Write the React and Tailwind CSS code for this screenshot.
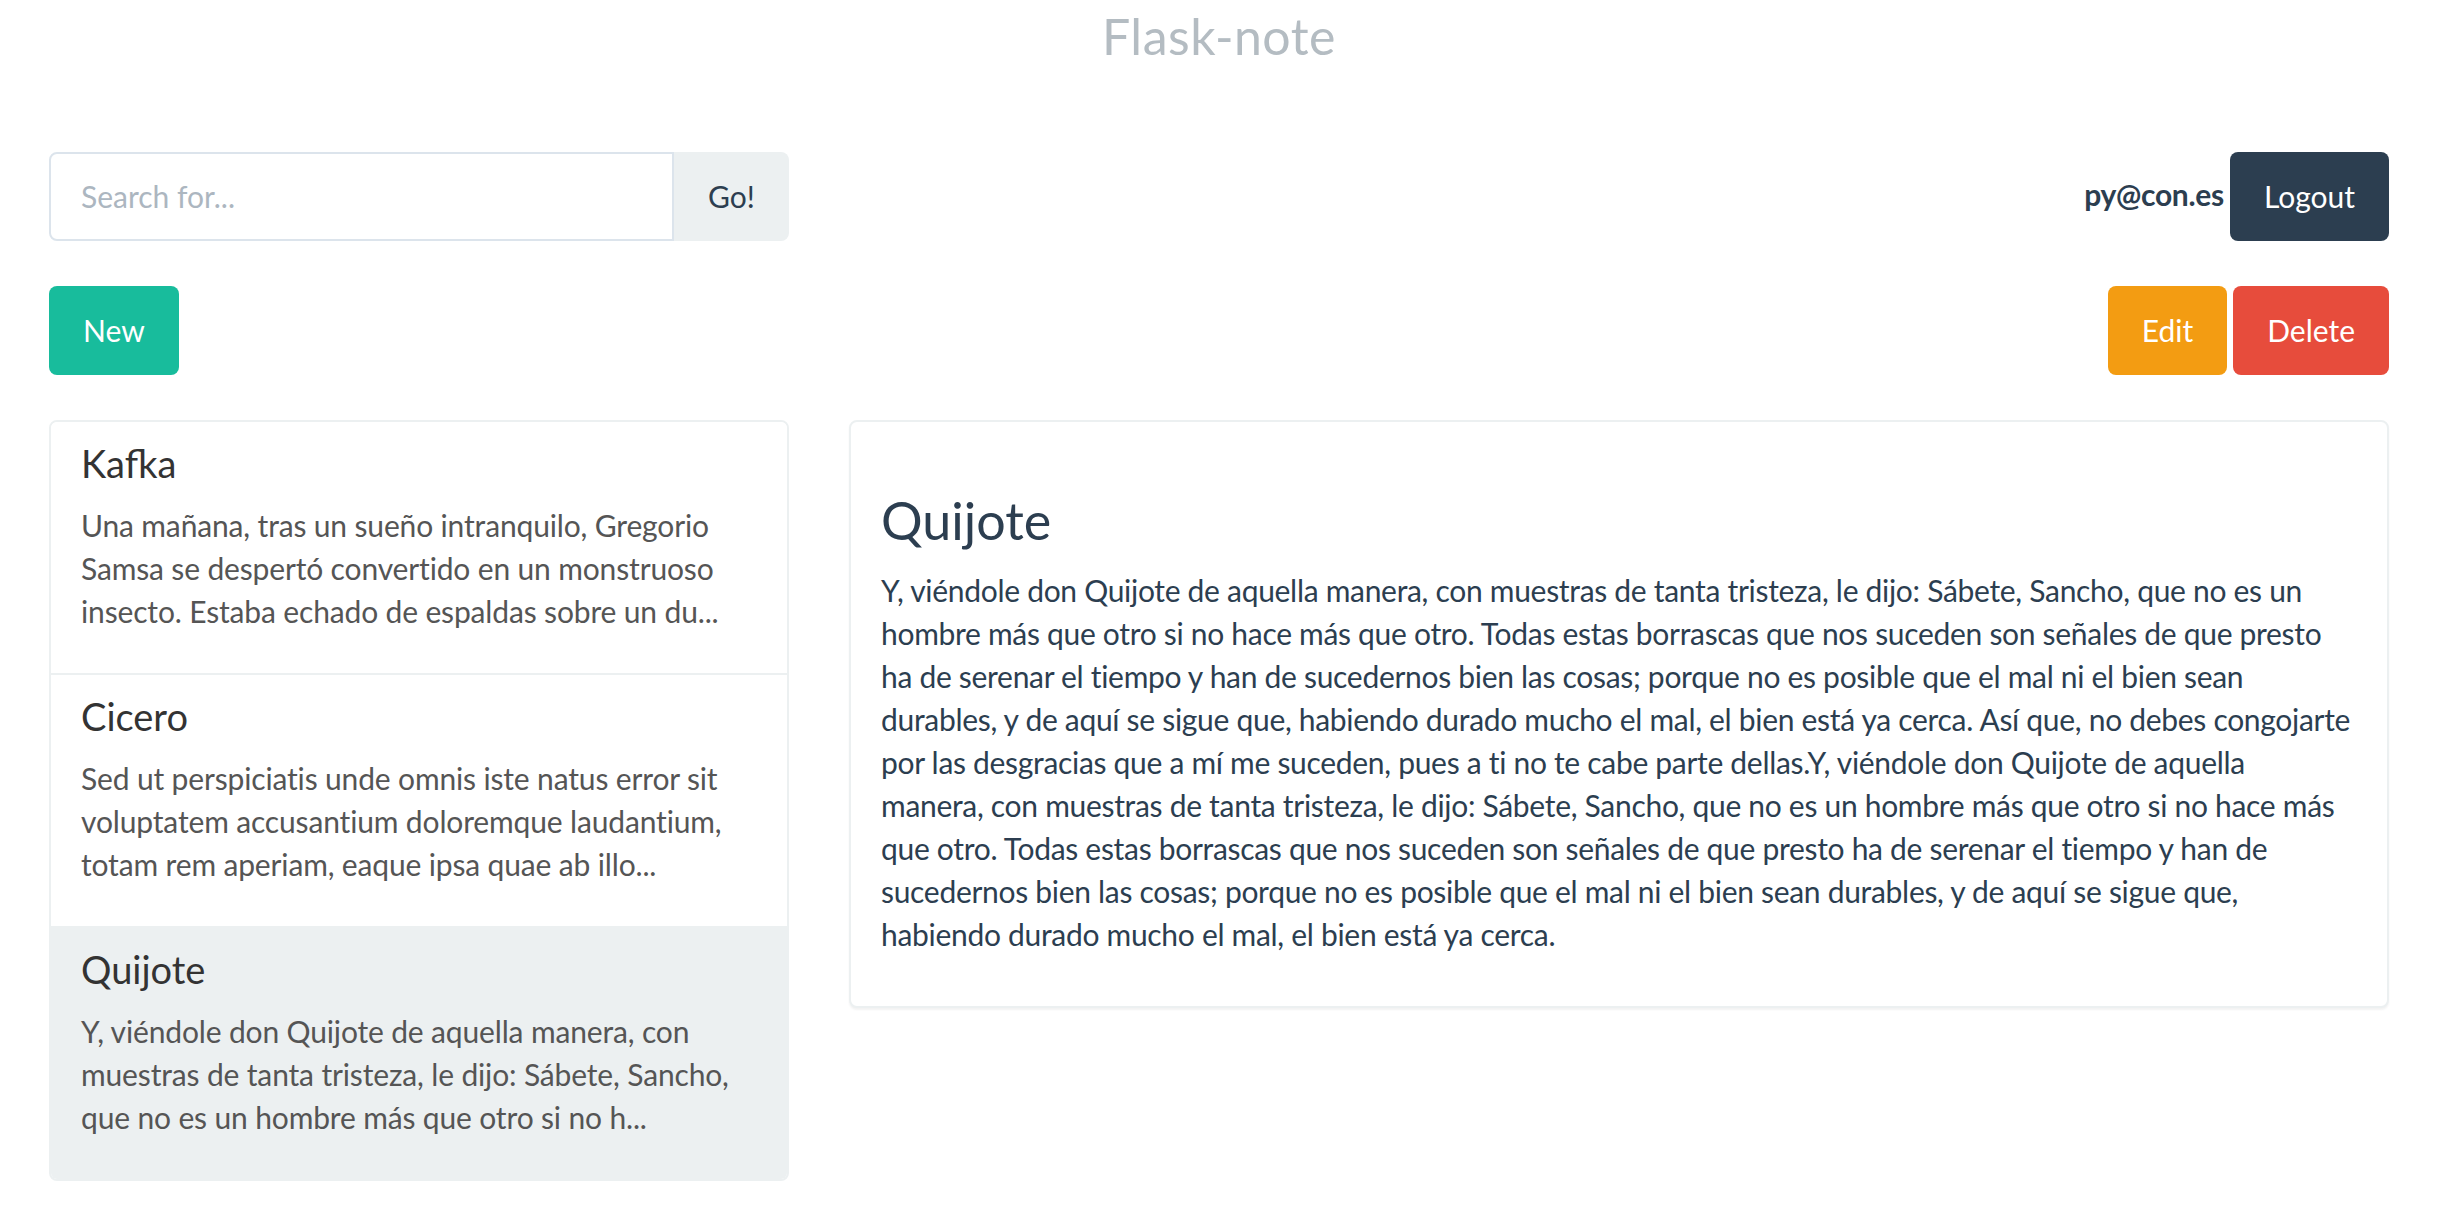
import { useState } from "react";

const notes = [
    {
        id: 1,
        title: "Kafka",
        preview:
            "Una mañana, tras un sueño intranquilo, Gregorio Samsa se despertó convertido en un monstruoso insecto. Estaba echado de espaldas sobre un du...",
    },
    {
        id: 2,
        title: "Cicero",
        preview:
            "Sed ut perspiciatis unde omnis iste natus error sit voluptatem accusantium doloremque laudantium, totam rem aperiam, eaque ipsa quae ab illo...",
    },
    {
        id: 3,
        title: "Quijote",
        preview:
            "Y, viéndole don Quijote de aquella manera, con muestras de tanta tristeza, le dijo: Sábete, Sancho, que no es un hombre más que otro si no h...",
    },
];

const quijote =
    "Y, viéndole don Quijote de aquella manera, con muestras de tanta tristeza, le dijo: Sábete, Sancho, que no es un hombre más que otro si no hace más que otro. Todas estas borrascas que nos suceden son señales de que presto ha de serenar el tiempo y han de sucedernos bien las cosas; porque no es posible que el mal ni el bien sean durables, y de aquí se sigue que, habiendo durado mucho el mal, el bien está ya cerca. Así que, no debes congojarte por las desgracias que a mí me suceden, pues a ti no te cabe parte dellas.";

// second copy of the passage, split where the original wraps
const repeatHead = "Y, viéndole don Quijote de aquella";
const repeatTail = quijote.slice(repeatHead.length + 1, quijote.indexOf(" Así que"));

export default function App() {
    const [selected, setSelected] = useState(3);
    const [search, setSearch] = useState("");

    const btn = "h-[89px] px-[34px] rounded-[8px] text-[30px] text-white leading-[43px]";

    return (
        <div className="min-h-screen bg-white font-['Lato','Open_Sans',sans-serif]">
            <div className="mx-auto w-[2340px]">
                <h1 className="pt-[9px] text-center text-[50px] leading-[55px] tracking-[0.5px] text-[#b4bcc2]">
                    Flask-note
                </h1>

                {/* search + user */}
                <div className="mt-[88px] flex items-center justify-between">
                    <div className="flex w-[740px] h-[89px]">
                        <input
                            type="text"
                            value={search}
                            onChange={(e) => setSearch(e.target.value)}
                            placeholder="Search for..."
                            className="flex-1 min-w-0 rounded-l-[8px] border-2 border-[#dce4ec] px-[30px] text-[30px] text-[#2c3e50] placeholder:text-[#acb6c0] outline-none"
                        />
                        <button className="w-[115px] rounded-r-[8px] bg-[#ecf0f1] text-[30px] text-[#2c3e50]">
                            Go!
                        </button>
                    </div>
                    <div className="flex items-center gap-[6px]">
                        <span className="mb-[4px] text-[30px] font-bold tracking-[-0.3px] text-[#2c3e50]">py@con.es</span>
                        <button className={`${btn} bg-[#2c3e50]`}>Logout</button>
                    </div>
                </div>

                {/* actions */}
                <div className="mt-[45px] flex items-center justify-between">
                    <button className={`${btn} bg-[#18bc9c]`}>New</button>
                    <div className="flex gap-[6px]">
                        <button className={`${btn} bg-[#f39c12]`}>Edit</button>
                        <button className={`${btn} bg-[#e74c3c]`}>Delete</button>
                    </div>
                </div>

                {/* list + detail */}
                <div className="mt-[45px] grid grid-cols-3 gap-[60px] items-start">
                    <div className="rounded-[8px] border-2 border-[#ecf0f1] overflow-hidden">
                        {notes.map((note, i) => (
                            <div
                                key={note.id}
                                onClick={() => setSelected(note.id)}
                                className={`px-[30px] py-[20px] cursor-pointer ${i > 0 ? "border-t-2 border-[#ecf0f1]" : ""} ${
                                    selected === note.id ? "bg-[#ecf0f1]" : "bg-white"
                                }`}
                            >
                                <h4 className="mb-[20px] text-[38px] leading-[42px] text-[#333333]">{note.title}</h4>
                                <p className="mb-[20px] text-[30px] leading-[43px] tracking-[-0.15px] text-[#555555]">
                                    {note.preview}
                                </p>
                            </div>
                        ))}
                    </div>

                    <div className="col-span-2 rounded-[8px] border-2 border-[#ecf0f1] bg-white px-[30px] py-[30px] shadow-[0_2px_2px_rgba(0,0,0,0.05)]">
                        <h3 className="mt-[40px] mb-[20px] text-[52px] leading-[57px] text-[#2c3e50]">Quijote</h3>
                        <p className="mb-[20px] text-[30px] leading-[43px] tracking-[-0.3px] text-[#2c3e50]">
                            {quijote}
                            {repeatHead}
                            <br />
                            {repeatTail}
                        </p>
                    </div>
                </div>
            </div>
        </div>
    );
}
